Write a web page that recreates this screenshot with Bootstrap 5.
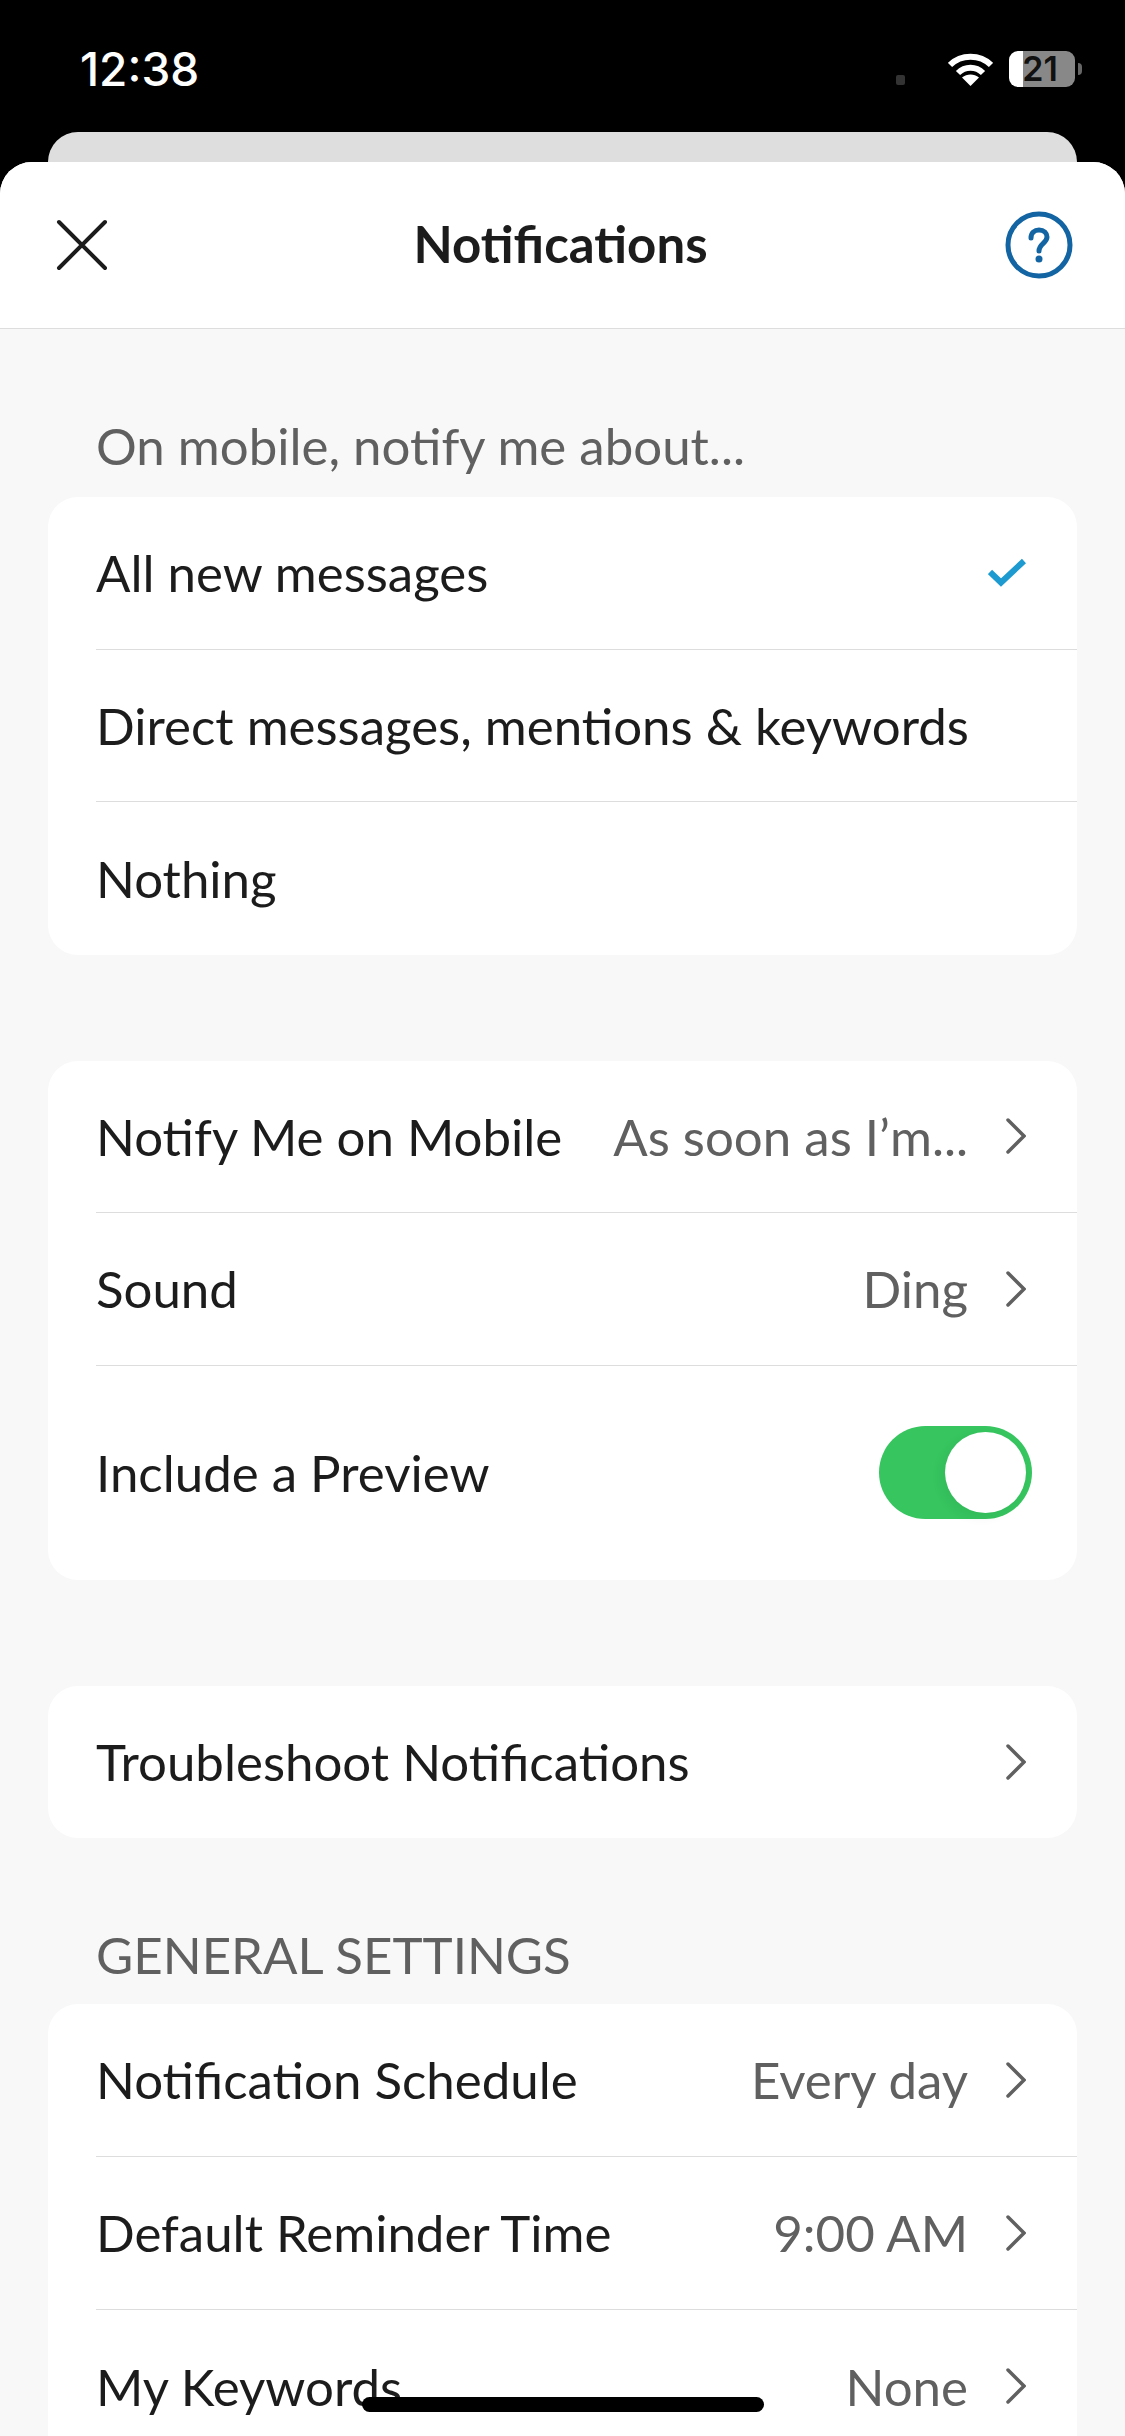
<!DOCTYPE html>
<html lang="en">
<head>
    <meta charset="UTF-8">
    <meta name="viewport" content="width=device-width, initial-scale=1.0">
    <title>Notifications</title>
    <link rel="stylesheet" href="https://cdn.jsdelivr.net/npm/bootstrap@5.3.0/dist/css/bootstrap.min.css">
    <style>
        html, body { height: 2436px; overflow: hidden; }
        body { background: #000; font-family: Lato, "Liberation Sans", sans-serif; font-feature-settings: "liga" 1; color: #1d1c1d; }
        .phone-status { height: 132px; padding: 6px 43px 0 80px; }
        .status-time { font-family: Inter, "Liberation Sans", sans-serif; font-weight: 500; font-size: 46px; line-height: 1; color: #fff; }
        .status-dot { width: 9px; height: 10px; border-radius: 2px; background: #333; margin: 22px 43px 0 0; }
        .status-battery { width: 66px; height: 36px; border-radius: 9px; margin-left: 16px; background: linear-gradient(90deg, #fff 14px, #888 14px); font-family: Inter, "Liberation Sans", sans-serif; font-weight: 600; font-size: 34px; line-height: 36px; color: #111; text-align: center; padding-right: 4px; }
        .status-tip { width: 4px; height: 12px; border-radius: 0 6px 6px 0; background: #666; margin-left: 3px; }
        .sheet-peek { height: 30px; margin: 0 48px; background: #dedede; border-radius: 30px 30px 0 0; }
        .sheet { height: 2274px; background: #f8f8f8; border-radius: 32px 32px 0 0; overflow: hidden; }
        .sheet-head { height: 167px; background: #fff; border-bottom: 1px solid #dddddd; padding: 0 52px 0 56px; }
        .sheet-title { font-size: 51px; font-weight: 700; line-height: 1; margin: -3px 0 0 8px; }
        .sheet-body { padding: 0 48px; }
        .group-label { font-size: 51px; line-height: 61px; color: #616061; padding-left: 48px; }
        .settings-group { background: #fff; border-radius: 30px; overflow: hidden; }
        .settings-row { height: 152.5px; margin-left: 48px; padding-right: 51px; border-bottom: 1px solid #dddddd; font-size: 51px; line-height: 61px; white-space: nowrap; }
        .settings-row:last-child { border-bottom: 0; }
        .row-tall { height: 214px; padding-right: 45px; }
        .row-wide { height: 153px; }
        .row-value { color: #616061; margin-left: auto; margin-right: 38px; }
        .row-chevron { width: 20px; height: 36px; flex: none; }
        .row-check { margin-left: auto; margin-right: 0; flex: none; }
        .row-toggle { width: 153px; height: 93px; border-radius: 47px; background: #36c55f; margin-left: auto; padding: 6px; }
        .row-toggle-knob { width: 81px; height: 81px; border-radius: 50%; background: #fff; margin-left: auto; box-shadow: -4px 4px 12px rgba(0, 0, 0, .06); }
        .home-bar { position: absolute; left: 362px; top: 2397px; width: 402px; height: 15px; border-radius: 8px; background: #000; }
    </style>
</head>
<body>
    <div class="phone-status d-flex align-items-center">
        <div class="status-time">12:38</div>
        <div class="d-flex align-items-center ms-auto">
            <div class="status-dot"></div>
            <svg width="45" height="33" viewBox="0 0 45 33" fill="none" stroke="#fff" stroke-width="6"><path d="M2 12C13 1 32 1 43 12"/><path d="M10 20C17 13 28 13 35 20"/><path d="M22.5 33L14 24.500C19 20.500 26 20.500 31 24.500Z" fill="#fff" stroke="none"/></svg>
            <div class="status-battery">21</div>
            <div class="status-tip"></div>
        </div>
    </div>
    <div class="sheet-peek"></div>
    <div class="sheet">
        <div class="sheet-head d-flex align-items-center justify-content-between">
            <svg width="52" height="52" viewBox="0 0 52 52" fill="none" stroke="#1d1c1d" stroke-width="4" stroke-linecap="round"><path d="M3 3L49 49M49 3L3 49"/></svg>
            <div class="sheet-title">Notifications</div>
            <svg width="68" height="68" viewBox="0 0 68 68" fill="none" stroke="#1264a3" stroke-width="5"><circle cx="34" cy="34" r="31"/><path d="M26 27C26 22 29.500 19 34 19C39 19 42 22 42 26C42 32 34 33 34 40" stroke-linecap="round"/><circle cx="34" cy="48" r="3.500" fill="#1264a3" stroke="none"/></svg>
        </div>
        <div class="sheet-body">
            <div class="group-label" style="margin-top: 86px; margin-bottom: 21px;">On mobile, notify me about...</div>
            <div class="settings-group">
                <div class="settings-row d-flex align-items-center">All new messages
                    <svg class="row-check" width="38" height="30" viewBox="0 0 38 30" fill="none" stroke="#1d9bd1" stroke-width="6"><path d="M2 14L13 24.500L36 3"/></svg>
                </div>
                <div class="settings-row d-flex align-items-center">Direct messages, mentions &amp; keywords</div>
                <div class="settings-row d-flex align-items-center">Nothing</div>
            </div>
            <div class="settings-group" style="margin-top: 106px;">
                <div class="settings-row d-flex align-items-center">Notify Me on Mobile
                    <span class="row-value">As soon as I’m...</span>
                    <svg class="row-chevron" viewBox="0 0 20 36" fill="none" stroke="#616061" stroke-width="3.500" stroke-linecap="round"><path d="M2 2L18 18L2 34"/></svg>
                </div>
                <div class="settings-row d-flex align-items-center">Sound
                    <span class="row-value">Ding</span>
                    <svg class="row-chevron" viewBox="0 0 20 36" fill="none" stroke="#616061" stroke-width="3.500" stroke-linecap="round"><path d="M2 2L18 18L2 34"/></svg>
                </div>
                <div class="settings-row row-tall d-flex align-items-center">Include a Preview
                    <div class="row-toggle"><div class="row-toggle-knob"></div></div>
                </div>
            </div>
            <div class="settings-group" style="margin-top: 106px;">
                <div class="settings-row d-flex align-items-center">Troubleshoot Notifications
                    <svg class="row-chevron ms-auto" viewBox="0 0 20 36" fill="none" stroke="#616061" stroke-width="3.500" stroke-linecap="round"><path d="M2 2L18 18L2 34"/></svg>
                </div>
            </div>
            <div class="group-label" style="margin-top: 86px; margin-bottom: 18.500px;">GENERAL SETTINGS</div>
            <div class="settings-group">
                <div class="settings-row row-wide d-flex align-items-center">Notification Schedule
                    <span class="row-value">Every day</span>
                    <svg class="row-chevron" viewBox="0 0 20 36" fill="none" stroke="#616061" stroke-width="3.500" stroke-linecap="round"><path d="M2 2L18 18L2 34"/></svg>
                </div>
                <div class="settings-row row-wide d-flex align-items-center">Default Reminder Time
                    <span class="row-value">9:00 AM</span>
                    <svg class="row-chevron" viewBox="0 0 20 36" fill="none" stroke="#616061" stroke-width="3.500" stroke-linecap="round"><path d="M2 2L18 18L2 34"/></svg>
                </div>
                <div class="settings-row row-wide d-flex align-items-center">My Keywords
                    <span class="row-value">None</span>
                    <svg class="row-chevron" viewBox="0 0 20 36" fill="none" stroke="#616061" stroke-width="3.500" stroke-linecap="round"><path d="M2 2L18 18L2 34"/></svg>
                </div>
            </div>
        </div>
    </div>
    <div class="home-bar"></div>
    <script src="https://cdn.jsdelivr.net/npm/bootstrap@5.3.0/dist/js/bootstrap.bundle.min.js"></script>
</body>
</html>
